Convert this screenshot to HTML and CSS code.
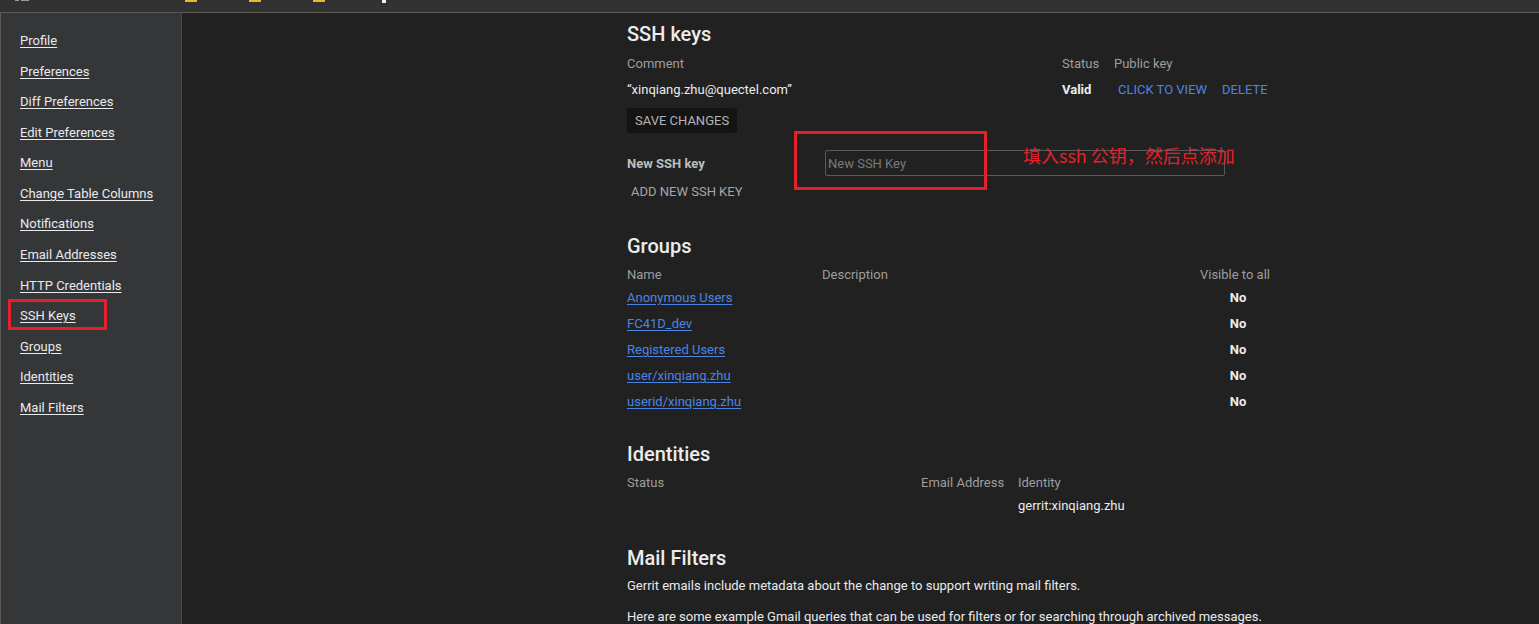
FILE: index.html
```html
<!DOCTYPE html>
<html lang="zh-CN">
<head>
<meta charset="utf-8">
<title>Settings</title>
<link rel="stylesheet" href="styles.css">
</head>
<body>
<header class="topbar">
  <span class="tb-grey a"></span><span class="tb-grey b"></span>
  <span class="tb-yellow y1"></span><span class="tb-yellow y2"></span><span class="tb-yellow y3"></span>
  <span class="tb-white"></span>
</header>
<div class="layout">
  <nav class="sidebar">
    <ul class="nav">
      <li><a href="#">Profile</a></li>
      <li><a href="#">Preferences</a></li>
      <li><a href="#">Diff Preferences</a></li>
      <li><a href="#">Edit Preferences</a></li>
      <li><a href="#">Menu</a></li>
      <li><a href="#">Change Table Columns</a></li>
      <li><a href="#">Notifications</a></li>
      <li><a href="#">Email Addresses</a></li>
      <li><a href="#">HTTP Credentials</a></li>
      <li class="marked"><a href="#">SSH Keys</a><span class="redbox nav-box"></span></li>
      <li><a href="#">Groups</a></li>
      <li><a href="#">Identities</a></li>
      <li><a href="#">Mail Filters</a></li>
    </ul>
  </nav>
  <main class="main">
    <section class="sec first">
      <h2>SSH keys</h2>
      <div class="ssh-grid head">
        <span>Comment</span><span>Status</span><span>Public key</span>
      </div>
      <div class="ssh-grid row">
        <span class="val">“xinqiang.zhu@quectel.com”</span>
        <span class="bold">Valid</span>
        <span class="actions"><a class="tbtn" href="#">CLICK TO VIEW</a><a class="tbtn" href="#">DELETE</a></span>
      </div>
      <button class="save">SAVE CHANGES</button>
      <div class="newkey">
        <span class="nk-label">New SSH key</span>
        <input class="nk-input" type="text" placeholder="New SSH Key">
        <span class="redbox input-box"></span>
        <span class="note">填入ssh 公钥，然后点添加</span>
      </div>
      <div class="addrow"><button class="add">ADD NEW SSH KEY</button></div>
    </section>

    <section class="sec">
      <h2>Groups</h2>
      <div class="grp-grid head">
        <span>Name</span><span>Description</span><span class="c">Visible to all</span>
      </div>
      <div class="grp-grid row"><a href="#">Anonymous Users</a><span></span><span class="c no">No</span></div>
      <div class="grp-grid row"><a href="#">FC41D_dev</a><span></span><span class="c no">No</span></div>
      <div class="grp-grid row"><a href="#">Registered Users</a><span></span><span class="c no">No</span></div>
      <div class="grp-grid row"><a href="#">user/xinqiang.zhu</a><span></span><span class="c no">No</span></div>
      <div class="grp-grid row"><a href="#">userid/xinqiang.zhu</a><span></span><span class="c no">No</span></div>
    </section>

    <section class="sec">
      <h2>Identities</h2>
      <div class="id-grid head">
        <span>Status</span><span>Email Address</span><span>Identity</span>
      </div>
      <div class="id-grid row"><span></span><span></span><span class="val">gerrit:xinqiang.zhu</span></div>
    </section>

    <section class="sec">
      <h2>Mail Filters</h2>
      <p class="p1">Gerrit emails include metadata about the change to support writing mail filters.</p>
      <p class="p2">Here are some example Gmail queries that can be used for filters or for searching through archived messages.</p>
    </section>
  </main>
</div>
</body>
</html>
```
FILE: styles.css
```css
* { box-sizing: border-box; }
html, body { margin: 0; padding: 0; }
body {
  background: #212121;
  color: #e8eaed;
  font-family: Roboto, "Liberation Sans", "Noto Sans CJK SC", sans-serif;
  font-size: 13px;
  height: 624px;
  overflow: hidden;
}
.topbar {
  height: 13px;
  background: #323232;
  border-bottom: 1px solid #5a5a5a;
  display: flex;
  align-items: flex-start;
}
.topbar span { display: block; }
.tb-grey { height: 1px; background: #9a9a9a; }
.tb-grey.a { width: 4px; margin-left: 15px; }
.tb-grey.b { width: 8px; margin-left: 2px; }
.tb-yellow { width: 12px; height: 2px; background: #e8b830; }
.tb-yellow.y1 { margin-left: 156px; }
.tb-yellow.y2 { margin-left: 52px; }
.tb-yellow.y3 { margin-left: 52px; }
.tb-white { width: 4px; height: 3px; background: #f0f0f0; margin-left: 57px; }

.layout { display: flex; height: 611px; }
.sidebar {
  width: 182px;
  flex: none;
  background: #353638;
  border-left: 1px solid #5a5a5a;
  border-right: 1px solid #4a4a4a;
}
.nav { list-style: none; margin: 0; padding: 13px 0 0 19px; }
.nav li { position: relative; height: 30.58px; line-height: 30.58px; }
.nav a { color: #e8eaed; text-decoration: underline; text-underline-offset: 2px; }

.redbox { position: absolute; border: 3px solid #e5202a; display: block; }
.nav-box { left: -12px; top: -2px; width: 99px; height: 31px; }

.main { flex: 1; padding: 7px 0 0 445px; }
.sec { margin-top: 25px; }
.sec.first { margin-top: 0; }
h2 { font-size: 20px; line-height: 28px; font-weight: 500; margin: 0; color: #ececec; }

.head { color: #9e9e9e; }
.ssh-grid { display: grid; grid-template-columns: 435px 52px auto; }
.ssh-grid.head { margin-top: 3px; line-height: 26px; }
.ssh-grid.row { line-height: 26px; }
.val { color: #ececec; }
.bold { font-weight: 700; color: #ececec; }
.actions { display: flex; gap: 7px; }
.tbtn { color: #4a85e6; text-decoration: none; padding: 0 4px; }

.save {
  display: block;
  margin-top: 5px;
  height: 25px;
  padding: 0 8px;
  background: #141414;
  color: #b4b4b4;
  border: none;
  border-radius: 3px;
  font: inherit;
}

.newkey { position: relative; display: flex; align-items: center; margin-top: 17px; height: 26px; }
.nk-label { width: 198px; font-weight: 700; color: #bdbdbd; }
.nk-input {
  width: 400px;
  height: 26px;
  background: transparent;
  border: 1px solid #5a5a5a;
  border-radius: 2px;
  color: #e8eaed;
  font: inherit;
  padding: 0 2px;
}
.nk-input::placeholder { color: #7a7a7a; }
.input-box { left: 167px; top: -19px; width: 193px; height: 59px; }
.note {
  position: absolute;
  left: 396px;
  top: -7px;
  font-family: "Noto Sans CJK SC", sans-serif;
  font-size: 18px;
  line-height: 24px;
  color: #e5202a;
}

.addrow { height: 31px; display: flex; align-items: center; }
.add {
  background: none;
  border: none;
  color: #a6a6a6;
  font: inherit;
  padding: 0 4px;
}

.grp-grid { display: grid; grid-template-columns: 195px 377px 72px; justify-content: start; white-space: nowrap; }
.grp-grid.head { margin-top: 5px; line-height: 20px; }
.grp-grid.row { line-height: 26px; }
.grp-grid a { color: #4a85e6; text-decoration: underline; text-underline-offset: 2px; justify-self: start; }
.c { text-align: center; }
.no { font-weight: 700; color: #ececec; padding-left: 6px; }

.id-grid { display: grid; grid-template-columns: 294px 97px auto; white-space: nowrap; }
.id-grid.head { margin-top: 5px; line-height: 20px; }
.id-grid.row { line-height: 26px; }

p { margin: 0; line-height: 20px; color: #e8eaed; white-space: nowrap; }
.p1 { margin-top: 4px; }
.p2 { margin-top: 11px; }
```
